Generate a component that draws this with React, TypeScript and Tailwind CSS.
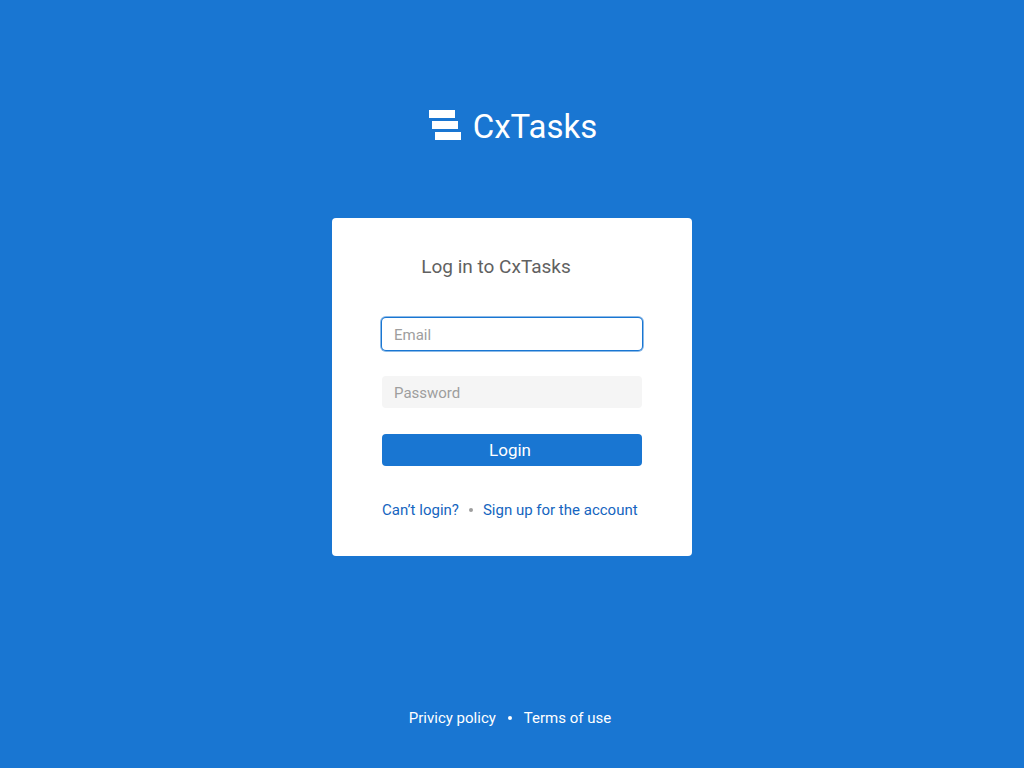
import { useState } from "react";

function Logo() {
  return (
    <div className="flex items-start gap-3 pl-0.5 text-white">
      <svg width="32" height="30" viewBox="0 0 32 30" fill="currentColor" aria-hidden="true">
        <rect x="0" y="0" width="26" height="8" />
        <rect x="3" y="11" width="26" height="8" />
        <rect x="6" y="22" width="26" height="8" />
      </svg>
      <span className="text-[33px] leading-[34px]">CxTasks</span>
    </div>
  );
}

function Dot({ className }: { className: string }) {
  return <span aria-hidden="true" className={`size-1 shrink-0 rounded-full ${className}`} />;
}

const fieldClass =
  "h-8 w-full rounded border-0 px-3 pt-0.5 text-[15px] text-[#424242] outline-none placeholder:text-[#9e9e9e]";

export default function App() {
  const [email, setEmail] = useState("");
  const [password, setPassword] = useState("");

  return (
    <div className="flex min-h-screen flex-col items-center bg-[#1976d2] px-4 pt-[110px] pb-10 font-[Roboto,sans-serif]">
      <header>
        <Logo />
      </header>

      <main className="mt-[74px] w-full max-w-[360px] rounded bg-white px-[50px] pt-9 pb-[34px]">
        <h1 className="pr-8 text-center text-[19px] leading-[26px] text-[#616161]">Log in to CxTasks</h1>
        <form className="mt-[38px] flex flex-col gap-[26px]" onSubmit={(e) => e.preventDefault()}>
          <input
            type="email"
            aria-label="Email"
            placeholder="Email"
            value={email}
            onChange={(e) => setEmail(e.target.value)}
            className={`${fieldClass} bg-white shadow-[0_0_0_2px_rgba(25,118,210,0.5)] ring-1 ring-[#1976d2]`}
          />
          <input
            type="password"
            aria-label="Password"
            placeholder="Password"
            value={password}
            onChange={(e) => setPassword(e.target.value)}
            className={`${fieldClass} bg-[#f5f5f5]`}
          />
          <button type="submit" className="h-8 w-full rounded bg-[#1976d2] pt-0.5 pr-1 text-[17px] text-white">
            Login
          </button>
        </form>
        <nav className="mt-8 flex items-center gap-2.5 text-[15px] leading-6 text-[#1565c0]">
          <a href="#recover">Can’t login?</a>
          <Dot className="bg-[#9e9e9e]" />
          <a href="#signup">Sign up for the account</a>
        </nav>
      </main>

      <footer className="mt-auto flex items-center gap-3 pr-1 text-[15px] leading-5 text-white">
        <a href="#privacy">Privicy policy</a>
        <Dot className="bg-white" />
        <a href="#terms">Terms of use</a>
      </footer>
    </div>
  );
}
